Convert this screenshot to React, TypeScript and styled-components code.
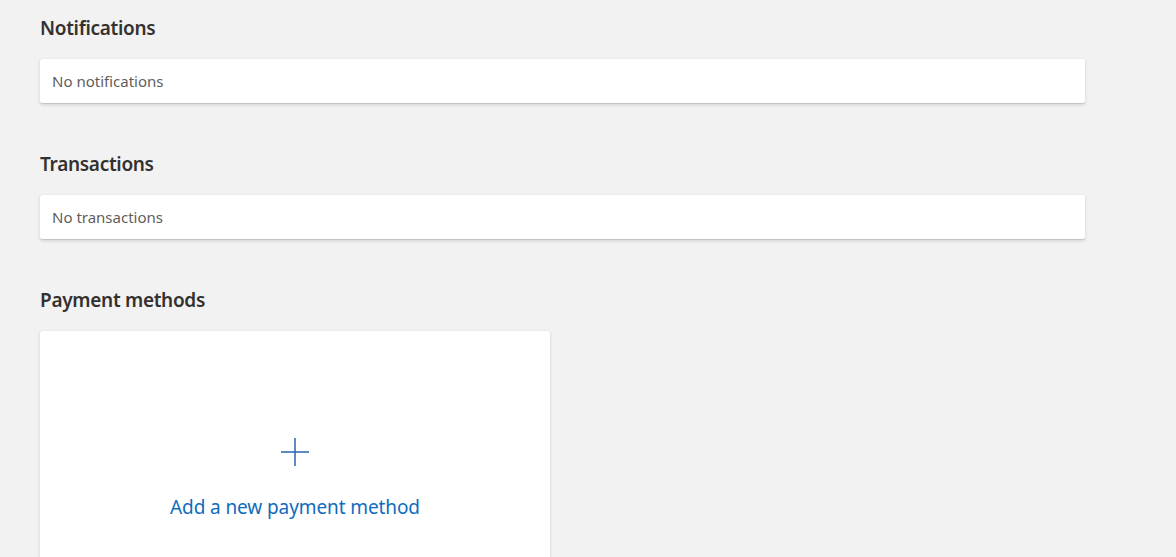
import React from "react";
import styled, { createGlobalStyle } from "styled-components";

const Global = createGlobalStyle`
  html, body {
    margin: 0;
    padding: 0;
    background: #f2f2f2;
  }
  body {
    font-family: "Noto Sans", "Open Sans", "Liberation Sans", sans-serif;
    color: #323130;
    -webkit-font-smoothing: antialiased;
  }
`;

const Page = styled.main`
  display: flex;
  flex-direction: column;
  gap: 49px;
  padding: 16px 91px 0 40px;
  min-height: 557px;
  box-sizing: border-box;
`;

const Section = styled.section`
  display: flex;
  flex-direction: column;
  gap: 19px;
`;

const Heading = styled.h2`
  margin: 0;
  font-size: 19px;
  line-height: 24px;
  font-weight: 600;
  color: #323130;
  letter-spacing: -0.3px;
`;

const Card = styled.div<{ $width?: number }>`
  background: #ffffff;
  box-shadow: 0 1.6px 3.6px rgba(0, 0, 0, 0.13), 0 0.3px 0.9px rgba(0, 0, 0, 0.11);
  border-radius: 2px;
  width: ${(p) => (p.$width ? `${p.$width}px` : "auto")};
  box-sizing: border-box;
`;

const EmptyRow = styled.div`
  padding: 12px 12px;
  font-size: 15px;
  line-height: 20px;
  color: #605e5c;
`;

const AddCard = styled.button`
  display: flex;
  flex-direction: column;
  align-items: center;
  gap: 29px;
  width: 100%;
  height: 280px;
  padding: 107px 0 0;
  border: none;
  background: transparent;
  cursor: pointer;
  font-family: inherit;
`;

const AddLabel = styled.span`
  font-size: 19px;
  line-height: 24px;
  color: #0f6cbd;
  letter-spacing: -0.1px;
`;

const PlusIcon = () => (
  <svg width="28" height="28" viewBox="0 0 28 28" fill="none">
    <path d="M14 0V28M0 14H28" stroke="#2a64ad" strokeWidth="1.5" />
  </svg>
);

export default function App() {
  return (
    <>
      <Global />
      <Page>
        <Section>
          <Heading>Notifications</Heading>
          <Card>
            <EmptyRow>No notifications</EmptyRow>
          </Card>
        </Section>
        <Section>
          <Heading>Transactions</Heading>
          <Card>
            <EmptyRow>No transactions</EmptyRow>
          </Card>
        </Section>
        <Section>
          <Heading>Payment methods</Heading>
          <Card $width={510}>
            <AddCard>
              <PlusIcon />
              <AddLabel>Add a new payment method</AddLabel>
            </AddCard>
          </Card>
        </Section>
      </Page>
    </>
  );
}
